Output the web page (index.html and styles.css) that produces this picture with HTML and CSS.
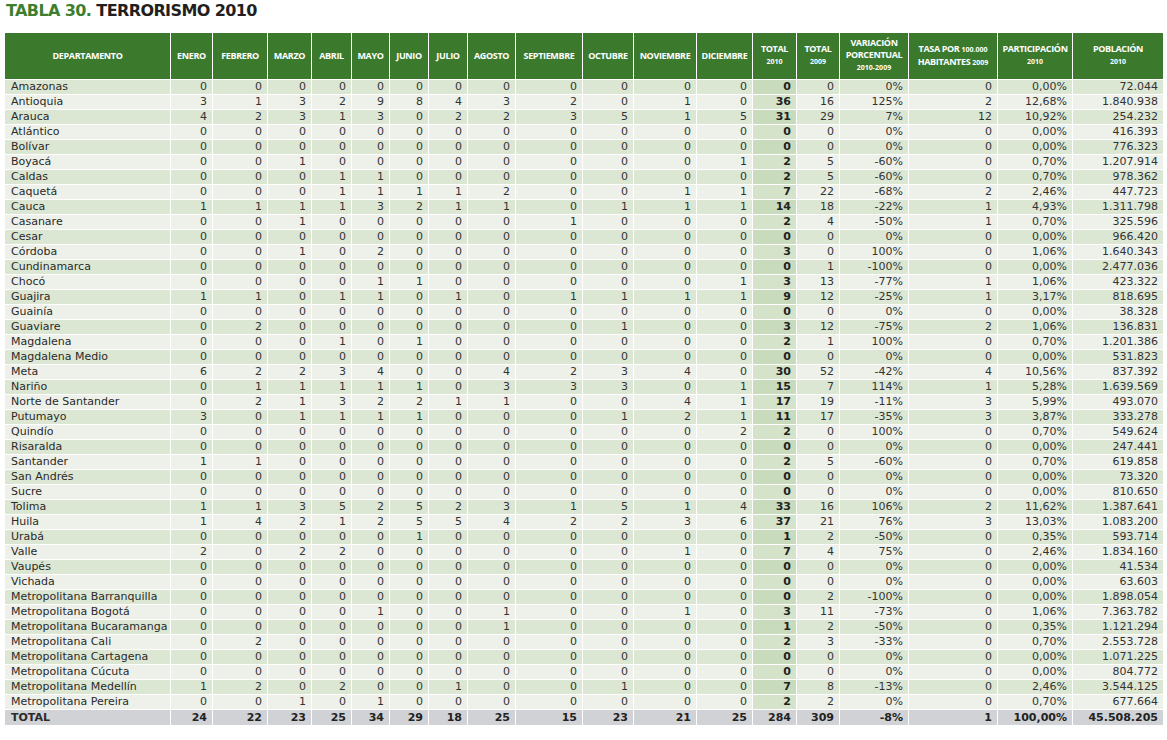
FILE: index.html
```html
<!DOCTYPE html>
<html lang="es">
<head>
<meta charset="utf-8">
<title>Tabla 30. Terrorismo 2010</title>
<link rel="stylesheet" href="styles.css">
</head>
<body>
<div class="page">
<h1 class="title"><span class="num">TABLA 30.</span> TERRORISMO 2010</h1>
<table class="data">
<colgroup>
<col class="c-dep"><col style="width:42px"><col style="width:55px"><col style="width:44px"><col style="width:40px"><col style="width:38px"><col style="width:39px"><col style="width:39px"><col style="width:48px"><col style="width:67px"><col style="width:51px"><col style="width:63px"><col style="width:56px"><col style="width:44px"><col style="width:43px"><col style="width:69px"><col style="width:89px"><col style="width:75px"><col style="width:90px">
</colgroup>
<thead>
<tr>
<th>DEPARTAMENTO</th><th>ENERO</th><th>FEBRERO</th><th>MARZO</th><th>ABRIL</th><th>MAYO</th><th>JUNIO</th><th>JULIO</th><th>AGOSTO</th><th>SEPTIEMBRE</th><th>OCTUBRE</th><th>NOVIEMBRE</th><th>DICIEMBRE</th>
<th>TOTAL<span class="s">2010</span></th>
<th>TOTAL<span class="s">2009</span></th>
<th>VARIACIÓN<br>PORCENTUAL<span class="s">2010-2009</span></th>
<th>TASA POR <span class="si">100.000</span><br>HABITANTES <span class="si">2009</span></th>
<th>PARTICIPACIÓN<span class="s">2010</span></th>
<th>POBLACIÓN<span class="s">2010</span></th>
</tr>
</thead>
<tbody>
<tr><td>Amazonas</td><td>0</td><td>0</td><td>0</td><td>0</td><td>0</td><td>0</td><td>0</td><td>0</td><td>0</td><td>0</td><td>0</td><td>0</td><td class="t">0</td><td>0</td><td>0%</td><td>0</td><td>0,00%</td><td>72.044</td></tr>
<tr><td>Antioquia</td><td>3</td><td>1</td><td>3</td><td>2</td><td>9</td><td>8</td><td>4</td><td>3</td><td>2</td><td>0</td><td>1</td><td>0</td><td class="t">36</td><td>16</td><td>125%</td><td>2</td><td>12,68%</td><td>1.840.938</td></tr>
<tr><td>Arauca</td><td>4</td><td>2</td><td>3</td><td>1</td><td>3</td><td>0</td><td>2</td><td>2</td><td>3</td><td>5</td><td>1</td><td>5</td><td class="t">31</td><td>29</td><td>7%</td><td>12</td><td>10,92%</td><td>254.232</td></tr>
<tr><td>Atlántico</td><td>0</td><td>0</td><td>0</td><td>0</td><td>0</td><td>0</td><td>0</td><td>0</td><td>0</td><td>0</td><td>0</td><td>0</td><td class="t">0</td><td>0</td><td>0%</td><td>0</td><td>0,00%</td><td>416.393</td></tr>
<tr><td>Bolívar</td><td>0</td><td>0</td><td>0</td><td>0</td><td>0</td><td>0</td><td>0</td><td>0</td><td>0</td><td>0</td><td>0</td><td>0</td><td class="t">0</td><td>0</td><td>0%</td><td>0</td><td>0,00%</td><td>776.323</td></tr>
<tr><td>Boyacá</td><td>0</td><td>0</td><td>1</td><td>0</td><td>0</td><td>0</td><td>0</td><td>0</td><td>0</td><td>0</td><td>0</td><td>1</td><td class="t">2</td><td>5</td><td>-60%</td><td>0</td><td>0,70%</td><td>1.207.914</td></tr>
<tr><td>Caldas</td><td>0</td><td>0</td><td>0</td><td>1</td><td>1</td><td>0</td><td>0</td><td>0</td><td>0</td><td>0</td><td>0</td><td>0</td><td class="t">2</td><td>5</td><td>-60%</td><td>0</td><td>0,70%</td><td>978.362</td></tr>
<tr><td>Caquetá</td><td>0</td><td>0</td><td>0</td><td>1</td><td>1</td><td>1</td><td>1</td><td>2</td><td>0</td><td>0</td><td>1</td><td>1</td><td class="t">7</td><td>22</td><td>-68%</td><td>2</td><td>2,46%</td><td>447.723</td></tr>
<tr><td>Cauca</td><td>1</td><td>1</td><td>1</td><td>1</td><td>3</td><td>2</td><td>1</td><td>1</td><td>0</td><td>1</td><td>1</td><td>1</td><td class="t">14</td><td>18</td><td>-22%</td><td>1</td><td>4,93%</td><td>1.311.798</td></tr>
<tr><td>Casanare</td><td>0</td><td>0</td><td>1</td><td>0</td><td>0</td><td>0</td><td>0</td><td>0</td><td>1</td><td>0</td><td>0</td><td>0</td><td class="t">2</td><td>4</td><td>-50%</td><td>1</td><td>0,70%</td><td>325.596</td></tr>
<tr><td>Cesar</td><td>0</td><td>0</td><td>0</td><td>0</td><td>0</td><td>0</td><td>0</td><td>0</td><td>0</td><td>0</td><td>0</td><td>0</td><td class="t">0</td><td>0</td><td>0%</td><td>0</td><td>0,00%</td><td>966.420</td></tr>
<tr><td>Córdoba</td><td>0</td><td>0</td><td>1</td><td>0</td><td>2</td><td>0</td><td>0</td><td>0</td><td>0</td><td>0</td><td>0</td><td>0</td><td class="t">3</td><td>0</td><td>100%</td><td>0</td><td>1,06%</td><td>1.640.343</td></tr>
<tr><td>Cundinamarca</td><td>0</td><td>0</td><td>0</td><td>0</td><td>0</td><td>0</td><td>0</td><td>0</td><td>0</td><td>0</td><td>0</td><td>0</td><td class="t">0</td><td>1</td><td>-100%</td><td>0</td><td>0,00%</td><td>2.477.036</td></tr>
<tr><td>Chocó</td><td>0</td><td>0</td><td>0</td><td>0</td><td>1</td><td>1</td><td>0</td><td>0</td><td>0</td><td>0</td><td>0</td><td>1</td><td class="t">3</td><td>13</td><td>-77%</td><td>1</td><td>1,06%</td><td>423.322</td></tr>
<tr><td>Guajira</td><td>1</td><td>1</td><td>0</td><td>1</td><td>1</td><td>0</td><td>1</td><td>0</td><td>1</td><td>1</td><td>1</td><td>1</td><td class="t">9</td><td>12</td><td>-25%</td><td>1</td><td>3,17%</td><td>818.695</td></tr>
<tr><td>Guainía</td><td>0</td><td>0</td><td>0</td><td>0</td><td>0</td><td>0</td><td>0</td><td>0</td><td>0</td><td>0</td><td>0</td><td>0</td><td class="t">0</td><td>0</td><td>0%</td><td>0</td><td>0,00%</td><td>38.328</td></tr>
<tr><td>Guaviare</td><td>0</td><td>2</td><td>0</td><td>0</td><td>0</td><td>0</td><td>0</td><td>0</td><td>0</td><td>1</td><td>0</td><td>0</td><td class="t">3</td><td>12</td><td>-75%</td><td>2</td><td>1,06%</td><td>136.831</td></tr>
<tr><td>Magdalena</td><td>0</td><td>0</td><td>0</td><td>1</td><td>0</td><td>1</td><td>0</td><td>0</td><td>0</td><td>0</td><td>0</td><td>0</td><td class="t">2</td><td>1</td><td>100%</td><td>0</td><td>0,70%</td><td>1.201.386</td></tr>
<tr><td>Magdalena Medio</td><td>0</td><td>0</td><td>0</td><td>0</td><td>0</td><td>0</td><td>0</td><td>0</td><td>0</td><td>0</td><td>0</td><td>0</td><td class="t">0</td><td>0</td><td>0%</td><td>0</td><td>0,00%</td><td>531.823</td></tr>
<tr><td>Meta</td><td>6</td><td>2</td><td>2</td><td>3</td><td>4</td><td>0</td><td>0</td><td>4</td><td>2</td><td>3</td><td>4</td><td>0</td><td class="t">30</td><td>52</td><td>-42%</td><td>4</td><td>10,56%</td><td>837.392</td></tr>
<tr><td>Nariño</td><td>0</td><td>1</td><td>1</td><td>1</td><td>1</td><td>1</td><td>0</td><td>3</td><td>3</td><td>3</td><td>0</td><td>1</td><td class="t">15</td><td>7</td><td>114%</td><td>1</td><td>5,28%</td><td>1.639.569</td></tr>
<tr><td>Norte de Santander</td><td>0</td><td>2</td><td>1</td><td>3</td><td>2</td><td>2</td><td>1</td><td>1</td><td>0</td><td>0</td><td>4</td><td>1</td><td class="t">17</td><td>19</td><td>-11%</td><td>3</td><td>5,99%</td><td>493.070</td></tr>
<tr><td>Putumayo</td><td>3</td><td>0</td><td>1</td><td>1</td><td>1</td><td>1</td><td>0</td><td>0</td><td>0</td><td>1</td><td>2</td><td>1</td><td class="t">11</td><td>17</td><td>-35%</td><td>3</td><td>3,87%</td><td>333.278</td></tr>
<tr><td>Quindío</td><td>0</td><td>0</td><td>0</td><td>0</td><td>0</td><td>0</td><td>0</td><td>0</td><td>0</td><td>0</td><td>0</td><td>2</td><td class="t">2</td><td>0</td><td>100%</td><td>0</td><td>0,70%</td><td>549.624</td></tr>
<tr><td>Risaralda</td><td>0</td><td>0</td><td>0</td><td>0</td><td>0</td><td>0</td><td>0</td><td>0</td><td>0</td><td>0</td><td>0</td><td>0</td><td class="t">0</td><td>0</td><td>0%</td><td>0</td><td>0,00%</td><td>247.441</td></tr>
<tr><td>Santander</td><td>1</td><td>1</td><td>0</td><td>0</td><td>0</td><td>0</td><td>0</td><td>0</td><td>0</td><td>0</td><td>0</td><td>0</td><td class="t">2</td><td>5</td><td>-60%</td><td>0</td><td>0,70%</td><td>619.858</td></tr>
<tr><td>San Andrés</td><td>0</td><td>0</td><td>0</td><td>0</td><td>0</td><td>0</td><td>0</td><td>0</td><td>0</td><td>0</td><td>0</td><td>0</td><td class="t">0</td><td>0</td><td>0%</td><td>0</td><td>0,00%</td><td>73.320</td></tr>
<tr><td>Sucre</td><td>0</td><td>0</td><td>0</td><td>0</td><td>0</td><td>0</td><td>0</td><td>0</td><td>0</td><td>0</td><td>0</td><td>0</td><td class="t">0</td><td>0</td><td>0%</td><td>0</td><td>0,00%</td><td>810.650</td></tr>
<tr><td>Tolima</td><td>1</td><td>1</td><td>3</td><td>5</td><td>2</td><td>5</td><td>2</td><td>3</td><td>1</td><td>5</td><td>1</td><td>4</td><td class="t">33</td><td>16</td><td>106%</td><td>2</td><td>11,62%</td><td>1.387.641</td></tr>
<tr><td>Huila</td><td>1</td><td>4</td><td>2</td><td>1</td><td>2</td><td>5</td><td>5</td><td>4</td><td>2</td><td>2</td><td>3</td><td>6</td><td class="t">37</td><td>21</td><td>76%</td><td>3</td><td>13,03%</td><td>1.083.200</td></tr>
<tr><td>Urabá</td><td>0</td><td>0</td><td>0</td><td>0</td><td>0</td><td>1</td><td>0</td><td>0</td><td>0</td><td>0</td><td>0</td><td>0</td><td class="t">1</td><td>2</td><td>-50%</td><td>0</td><td>0,35%</td><td>593.714</td></tr>
<tr><td>Valle</td><td>2</td><td>0</td><td>2</td><td>2</td><td>0</td><td>0</td><td>0</td><td>0</td><td>0</td><td>0</td><td>1</td><td>0</td><td class="t">7</td><td>4</td><td>75%</td><td>0</td><td>2,46%</td><td>1.834.160</td></tr>
<tr><td>Vaupés</td><td>0</td><td>0</td><td>0</td><td>0</td><td>0</td><td>0</td><td>0</td><td>0</td><td>0</td><td>0</td><td>0</td><td>0</td><td class="t">0</td><td>0</td><td>0%</td><td>0</td><td>0,00%</td><td>41.534</td></tr>
<tr><td>Vichada</td><td>0</td><td>0</td><td>0</td><td>0</td><td>0</td><td>0</td><td>0</td><td>0</td><td>0</td><td>0</td><td>0</td><td>0</td><td class="t">0</td><td>0</td><td>0%</td><td>0</td><td>0,00%</td><td>63.603</td></tr>
<tr><td>Metropolitana Barranquilla</td><td>0</td><td>0</td><td>0</td><td>0</td><td>0</td><td>0</td><td>0</td><td>0</td><td>0</td><td>0</td><td>0</td><td>0</td><td class="t">0</td><td>2</td><td>-100%</td><td>0</td><td>0,00%</td><td>1.898.054</td></tr>
<tr><td>Metropolitana Bogotá</td><td>0</td><td>0</td><td>0</td><td>0</td><td>1</td><td>0</td><td>0</td><td>1</td><td>0</td><td>0</td><td>1</td><td>0</td><td class="t">3</td><td>11</td><td>-73%</td><td>0</td><td>1,06%</td><td>7.363.782</td></tr>
<tr><td>Metropolitana Bucaramanga</td><td>0</td><td>0</td><td>0</td><td>0</td><td>0</td><td>0</td><td>0</td><td>1</td><td>0</td><td>0</td><td>0</td><td>0</td><td class="t">1</td><td>2</td><td>-50%</td><td>0</td><td>0,35%</td><td>1.121.294</td></tr>
<tr><td>Metropolitana Cali</td><td>0</td><td>2</td><td>0</td><td>0</td><td>0</td><td>0</td><td>0</td><td>0</td><td>0</td><td>0</td><td>0</td><td>0</td><td class="t">2</td><td>3</td><td>-33%</td><td>0</td><td>0,70%</td><td>2.553.728</td></tr>
<tr><td>Metropolitana Cartagena</td><td>0</td><td>0</td><td>0</td><td>0</td><td>0</td><td>0</td><td>0</td><td>0</td><td>0</td><td>0</td><td>0</td><td>0</td><td class="t">0</td><td>0</td><td>0%</td><td>0</td><td>0,00%</td><td>1.071.225</td></tr>
<tr><td>Metropolitana Cúcuta</td><td>0</td><td>0</td><td>0</td><td>0</td><td>0</td><td>0</td><td>0</td><td>0</td><td>0</td><td>0</td><td>0</td><td>0</td><td class="t">0</td><td>0</td><td>0%</td><td>0</td><td>0,00%</td><td>804.772</td></tr>
<tr><td>Metropolitana Medellín</td><td>1</td><td>2</td><td>0</td><td>2</td><td>0</td><td>0</td><td>1</td><td>0</td><td>0</td><td>1</td><td>0</td><td>0</td><td class="t">7</td><td>8</td><td>-13%</td><td>0</td><td>2,46%</td><td>3.544.125</td></tr>
<tr><td>Metropolitana Pereira</td><td>0</td><td>0</td><td>1</td><td>0</td><td>1</td><td>0</td><td>0</td><td>0</td><td>0</td><td>0</td><td>0</td><td>0</td><td class="t">2</td><td>2</td><td>0%</td><td>0</td><td>0,70%</td><td>677.664</td></tr>
</tbody>
<tfoot>
<tr><td>TOTAL</td><td>24</td><td>22</td><td>23</td><td>25</td><td>34</td><td>29</td><td>18</td><td>25</td><td>15</td><td>23</td><td>21</td><td>25</td><td>284</td><td>309</td><td>-8%</td><td>1</td><td>100,00%</td><td>45.508.205</td></tr>
</tfoot>
</table>
</div>
</body>
</html>
```

FILE: styles.css
```css
body {
  margin: 0;
  background: #ffffff;
  font-family: "DejaVu Sans", Verdana, sans-serif;
}

.page {
  padding: 0 0 0 5px;
}

.title {
  margin: 0 0 11px 1px;
  font-family: "DejaVu Sans", Verdana, sans-serif;
  font-weight: 700;
  font-size: 16px;
  letter-spacing: -0.6px;
  line-height: 22px;
  color: #231f20;
}

.title .num {
  color: #3d7f2e;
}

.data {
  border-collapse: separate;
  border-spacing: 0;
  table-layout: fixed;
  width: 1158px;
}

.c-dep {
  width: 166px;
}

.data th {
  height: 46px;
  padding: 0 2px;
  background: #3b7a2d;
  color: #ffffff;
  font-family: "Open Sans", sans-serif;
  font-weight: 700;
  font-size: 9px;
  letter-spacing: -0.35px;
  line-height: 12px;
  text-align: center;
  vertical-align: middle;
  border-right: 1px solid #ffffff;
  border-bottom: 1px solid #ffffff;
  white-space: nowrap;
}

.data th .s {
  display: block;
  font-size: 7px;
  line-height: 14px;
  letter-spacing: 0;
}

.data th .si {
  font-size: 7px;
  letter-spacing: 0;
}

.data th:last-child,
.data td:last-child {
  border-right: 0;
}

.data td {
  height: 14px;
  padding: 0 5px 0 0;
  font-size: 11px;
  line-height: 14px;
  color: #333333;
  text-align: right;
  white-space: nowrap;
  overflow: hidden;
  border-right: 1px solid #ffffff;
  border-bottom: 1px solid #ffffff;
}

.data td:first-child {
  text-align: left;
  padding: 0 0 0 6px;
  color: #2a2a2a;
}

.data tbody tr:nth-child(odd) td {
  background: #dce7d3;
}

.data tbody tr:nth-child(even) td {
  background: #edf1e9;
}

.data tbody tr:nth-child(odd) td.t {
  background: #c8dbbc;
}

.data tbody tr:nth-child(even) td.t {
  background: #d4e3c9;
}

.data td.t {
  font-weight: 700;
  color: #222222;
}

.data tfoot td {
  height: 15px;
  line-height: 15px;
  background: #d1d2d6;
  font-weight: 700;
  color: #222222;
}
```
